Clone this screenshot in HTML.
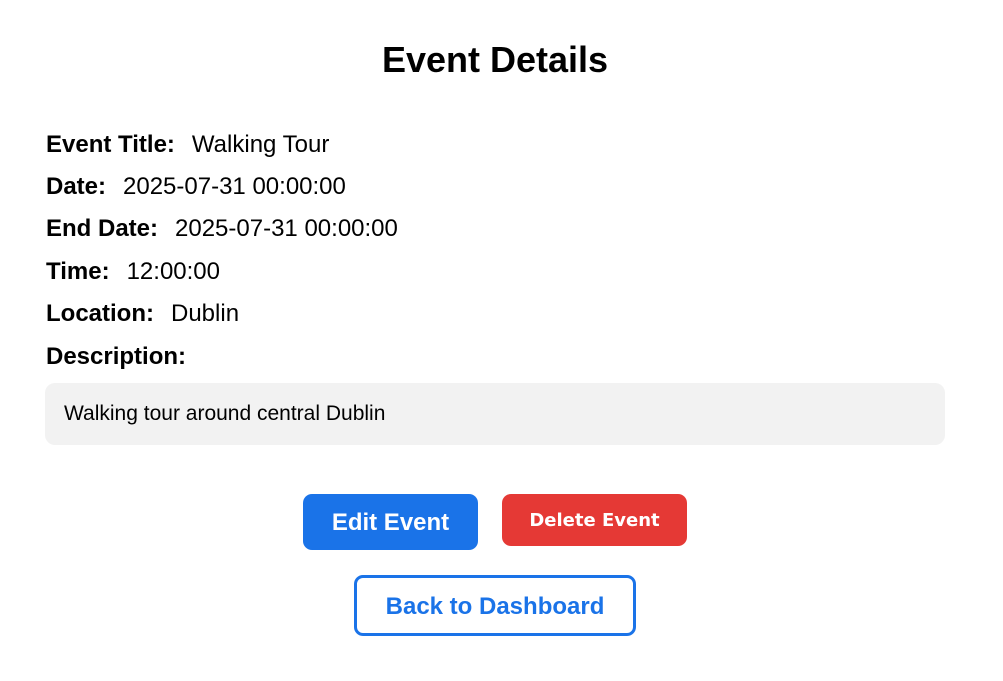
<!DOCTYPE html>
<html><head><style>
body{margin:0;background:#fff;font-family:"Liberation Sans",Arial,sans-serif;color:#000;width:1003px;height:681px;overflow:hidden}
h1{position:absolute;top:39px;left:0;width:990px;text-align:center;margin:0;font-size:36px;font-weight:bold}
.row{position:absolute;left:46px;font-size:24px;white-space:nowrap}
.row b{margin-right:17px}
.desc{position:absolute;left:45px;top:383px;width:900px;height:62px;background:#f2f2f2;border-radius:10px;box-sizing:border-box;padding-left:19px;line-height:62px;font-size:21px}
.btn{position:absolute;box-sizing:border-box;display:flex;align-items:center;justify-content:center;font-weight:bold;border-radius:9px}
</style></head><body>
<h1>Event Details</h1>
<div class="row" style="top:131px"><b>Event Title:</b>Walking Tour</div>
<div class="row" style="top:173px"><b>Date:</b>2025-07-31 00:00:00</div>
<div class="row" style="top:215px"><b>End Date:</b>2025-07-31 00:00:00</div>
<div class="row" style="top:258px"><b>Time:</b>12:00:00</div>
<div class="row" style="top:300px"><b>Location:</b>Dublin</div>
<div class="row" style="top:343px"><b>Description:</b></div>
<div class="desc">Walking tour around central Dublin</div>
<div class="btn" style="left:303px;top:494px;width:175px;height:56px;background:#1a73e8;color:#fff;font-size:24px;padding-top:2px">Edit Event</div>
<div class="btn" style="left:502px;top:494px;width:185px;height:52px;background:#e53935;color:#fff;font-size:18px;font-family:'DejaVu Sans',sans-serif">Delete Event</div>
<div class="btn" style="left:354px;top:575px;width:282px;height:61px;border:3px solid #1a73e8;color:#1a73e8;font-size:24px;background:#fff;padding-top:2px">Back to Dashboard</div>
</body></html>
